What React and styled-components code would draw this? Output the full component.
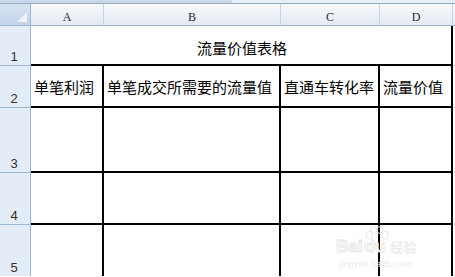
import React from "react";
import styled, { createGlobalStyle } from "styled-components";

const Global = createGlobalStyle`
  * { box-sizing: border-box; }
  html, body { margin: 0; padding: 0; background: #fff; overflow: hidden; }
  body { font-family: "Noto Sans CJK SC", "Noto Sans", sans-serif; }
`;

const Page = styled.div`
  position: relative;
  width: 455px;
  height: 277px;
  overflow: hidden;
  background: #fff;
`;

const TopStrip = styled.div`
  display: flex;
  height: 4px;
  border-bottom: 1px solid #95abc5;
`;

const StripPart = styled.div`
  width: ${(p) => p.$w || "auto"};
  flex: ${(p) => (p.$w ? "none" : "1")};
  background: ${(p) => p.$bg};
`;

const Sheet = styled.div`
  display: grid;
  grid-template-columns: 31px 73px 177px 99px 73px 1fr;
  grid-template-rows: 22px 40px 42px 65px 52px 51px;
`;

const Corner = styled.div`
  position: relative;
  background: linear-gradient(#d6e2f1, #c3d4ea);
  border-right: 1px solid #9eb6ce;
  border-bottom: 1px solid #9eb6ce;
  &::after {
    content: "";
    position: absolute;
    right: 3px;
    bottom: 3px;
    width: 0;
    height: 0;
    border-left: 10px solid transparent;
    border-bottom: 10px solid #eef3f9;
  }
`;

const ColHead = styled.div`
  display: flex;
  align-items: flex-end;
  justify-content: center;
  padding-bottom: 2px;
  background: linear-gradient(#f7f9fc, #e4eaf2);
  border-right: 1px solid #c7d3e1;
  border-bottom: 1px solid #9eb6ce;
  font-family: "Liberation Serif", "DejaVu Serif", serif;
  font-size: 12px;
  color: #2b2b2b;
  line-height: 1;
`;

const RowHead = styled.div`
  display: flex;
  align-items: flex-end;
  justify-content: center;
  padding-bottom: 2px;
  padding-right: 2px;
  background: #e4ecf7;
  border-right: 1px solid #9eb6ce;
  border-bottom: ${(p) => (p.$last ? "none" : "1px solid #9eb6ce")};
  font-family: "Liberation Sans", "DejaVu Sans", sans-serif;
  font-size: 13px;
  color: #303030;
  line-height: 1;
`;

const TitleCell = styled.div`
  grid-column: span 4;
  display: flex;
  align-items: center;
  justify-content: center;
  padding-top: 5px;
  padding-left: 2px;
  border-right: 2px solid #000;
  border-bottom: 2px solid #000;
  font-size: 15px;
  color: #000;
`;

const Cell = styled.div`
  display: flex;
  align-items: center;
  padding-left: 3px;
  border-right: 2px solid #000;
  border-bottom: ${(p) => (p.$last ? "none" : "2px solid #000")};
  font-size: 15px;
  color: #000;
  white-space: nowrap;
  overflow: hidden;
`;

const Spare = styled.div`
  border-bottom: 1px solid #d8dee8;
  background: ${(p) => (p.$head ? "linear-gradient(#f7f9fc, #e4eaf2)" : "#fff")};
  ${(p) => (p.$head ? "border-bottom-color: #9eb6ce;" : "")}
`;

const Watermark = styled.div`
  position: absolute;
  left: 336px;
  top: 226px;
  display: flex;
  flex-direction: column;
  align-items: center;
  color: #ebebeb;
  pointer-events: none;
`;

const MarkLine = styled.div`
  display: flex;
  align-items: center;
  gap: 2px;
  font-family: "Liberation Sans", sans-serif;
  font-weight: bold;
  font-size: 17px;
  line-height: 1;
  -webkit-text-stroke: 1px #e6e6e6;
  color: #fff;
`;

const MarkSub = styled.div`
  font-family: "Liberation Sans", sans-serif;
  font-size: 9px;
  color: #ececec;
  margin-top: 4px;
`;

const MarkCn = styled.span`
  font-family: "Noto Sans CJK SC", sans-serif;
  font-size: 13px;
  font-weight: bold;
  -webkit-text-stroke: 0;
  color: #ebebeb;
  margin-left: 3px;
`;

const heads = ["A", "B", "C", "D"];
const row2 = ["单笔利润", "单笔成交所需要的流量值", "直通车转化率", "流量价值"];

export default function App() {
  return (
    <Page>
      <Global />
      <TopStrip>
        <StripPart $w="232px" $bg="#c9d8ea" />
        <StripPart $bg="#e8eef5" />
      </TopStrip>
      <Sheet>
        <Corner />
        {heads.map((h) => (
          <ColHead key={h}>{h}</ColHead>
        ))}
        <Spare $head />

        <RowHead>1</RowHead>
        <TitleCell>流量价值表格</TitleCell>
        <Spare />

        <RowHead>2</RowHead>
        {row2.map((t) => (
          <Cell key={t}>{t}</Cell>
        ))}
        <Spare />

        {[3, 4, 5].map((n) => (
          <React.Fragment key={n}>
            <RowHead $last={n === 5}>{n}</RowHead>
            {heads.map((h) => (
              <Cell key={h} $last={n === 5} />
            ))}
            <Spare />
          </React.Fragment>
        ))}
      </Sheet>
      <Watermark>
        <svg width="30" height="16" viewBox="0 0 30 16" style={{ marginBottom: -4 }}>
          <g fill="none" stroke="#e8e8e8" strokeWidth="1">
            <ellipse cx="8" cy="9" rx="3" ry="4" />
            <ellipse cx="13" cy="4" rx="3" ry="3.5" />
            <ellipse cx="19" cy="4" rx="3" ry="3.5" />
            <ellipse cx="24" cy="9" rx="3" ry="4" />
          </g>
        </svg>
        <MarkLine>
          Bai<span>du</span>
          <MarkCn>经验</MarkCn>
        </MarkLine>
        <MarkSub>jingyan.baidu.com</MarkSub>
      </Watermark>
    </Page>
  );
}
